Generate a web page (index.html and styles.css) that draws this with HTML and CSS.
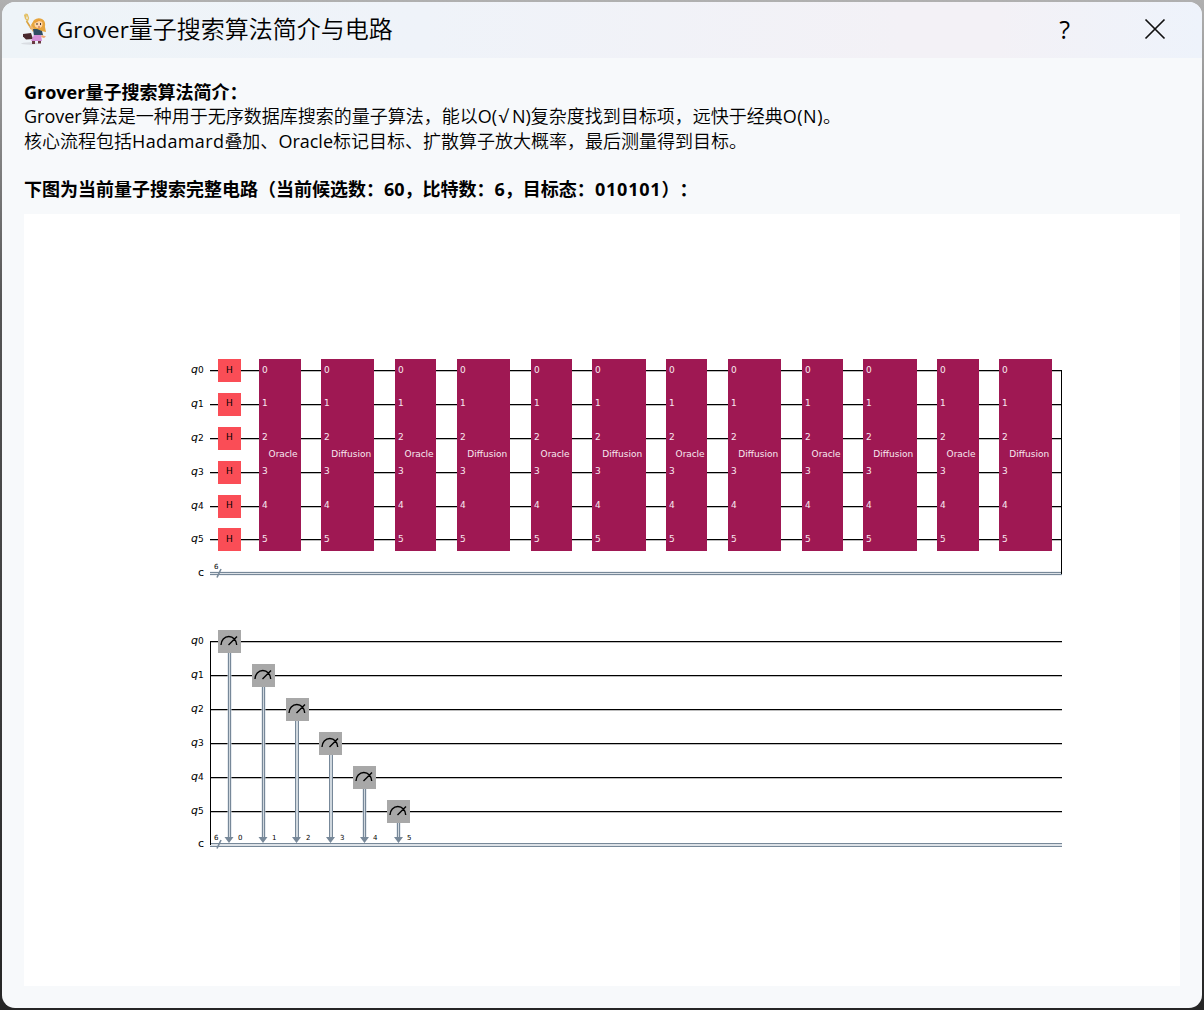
FILE: index.html
```html
<!DOCTYPE html>
<html lang="zh-CN">
<head>
<meta charset="utf-8">
<title>Grover量子搜索算法简介与电路</title>
<link rel="stylesheet" href="styles.css">
</head>
<body>
<div class="dialog">
  <header class="titlebar">
    <svg class="app-icon" viewBox="0 0 28 34" width="28" height="34">
      <ellipse cx="9" cy="31.500" rx="9" ry="1.200" fill="#d9dde2"/>
      <path d="M5.500 9l5 8" fill="none" stroke="#d9a13e" stroke-width="1.600"/>
      <path d="M3.500 2.500l1 4 2 2.500 1-3-1.500-4M5 1.500v4" fill="none" stroke="#e3bf62" stroke-width="1.300"/>
      <path d="M2 22l8-1 2 6-7 .500-3-3z" fill="#49282d"/>
      <path d="M13 8q4-3 8-1 4 2 3 8l1 5-5-1-8-2-2-4z" fill="#e6a53e"/>
      <path d="M8 14l3 0 3 4-2 2z" fill="#edb56e"/>
      <circle cx="17.500" cy="12" r="4" fill="#ffd5a7"/>
      <path d="M13 10q4-5 9 0l-4-1-4 2z" fill="#e99d35"/>
      <path d="M16 11v2M19.500 11v2" stroke="#3b302d"/>
      <path d="M17 15h2" stroke="#bd5740"/>
      <path d="M12 17l4 0 5 2 1 4-9 1z" fill="#304d63"/>
      <path d="M13 23h7l1 6h-11z" fill="#d48fd7"/>
      <path d="M11 29h3v3h-3zM17 29h3v2.500h-3z" fill="#6b3941"/>
      <path d="M21 23l4 1.500-2 1.500-3-1z" fill="#f0a66e"/>
    </svg>
    <h1 class="title"><span class="latin">Grover</span>量子搜索算法简介与电路</h1>
    <span class="help">?</span>
    <svg class="close" viewBox="0 0 22 22" width="22" height="22"><path d="M1.500 1.500l19 19M20.500 1.500l-19 19"/></svg>
  </header>
  <main class="content">
    <div class="intro">
      <p><b>Grover量子搜索算法简介：</b></p>
      <p class="summary"><span class="latin">Grover</span>算法是一种用于无序数据库搜索的量子算法，能以<span class="latin">O(<span class="root">√</span>N)</span>复杂度找到目标项，远快于经典<span class="latin order">O(N)</span>。</p>
      <p>核心流程包括<span class="latin name">Hadamard</span>叠加、<span class="latin">Oracle</span>标记目标、扩散算子放大概率，最后测量得到目标。</p>
      <p class="caption"><b>下图为当前量子搜索完整电路（当前候选数：60，比特数：6，目标态：<span class="state">010101</span>）：</b></p>
    </div>
    <div class="figure">
      <svg class="circuit" viewBox="24 214 1156 772" width="1156" height="772">
        <defs>
          <g id="labels">
            <text x="191" y="373"><tspan class="q">q</tspan><tspan class="sub">0</tspan></text>
            <text x="191" y="407"><tspan class="q">q</tspan><tspan class="sub">1</tspan></text>
            <text x="191" y="441"><tspan class="q">q</tspan><tspan class="sub">2</tspan></text>
            <text x="191" y="475"><tspan class="q">q</tspan><tspan class="sub">3</tspan></text>
            <text x="191" y="509"><tspan class="q">q</tspan><tspan class="sub">4</tspan></text>
            <text x="191" y="542"><tspan class="q">q</tspan><tspan class="sub">5</tspan></text>
          </g>
          <g id="pins">
            <text x="3" y="373">0</text><text x="3" y="406">1</text><text x="3" y="440">2</text>
            <text x="3" y="474">3</text><text x="3" y="508">4</text><text x="3" y="542">5</text>
          </g>
          <g id="oracle"><rect y="359" width="41" height="192"/><use href="#pins"/><text x="9.600" y="457" textLength="29">Oracle</text></g>
          <g id="diffusion"><rect y="359" width="53" height="192"/><use href="#pins"/><text x="10.300" y="457" textLength="40">Diffusion</text></g>
          <g id="meter"><rect width="23" height="23"/><path d="M3 15A7.800 8.500 0 0 1 18.700 15M10.500 15L19 6.500"/></g>
        </defs>

        <g class="halo"><path d="M210 371H1062M210 405H1062M210 439H1062M210 473H1062M210 507H1062M210 540H1062"/></g>
        <g class="wire"><path d="M210 370.500H1062M210 404.500H1062M210 438.500H1062M210 472.500H1062M210 506.500H1062M210 539.500H1062"/></g>
        <g class="bus"><path class="bus-fill" d="M210 573.500H1062"/><path d="M210 572.500H1062M210 574.500H1062"/><path class="slash" d="M217 577.500l4-8.500"/></g>
        <path class="edge" d="M1061.500 370V574"/>
        <use href="#labels"/>
        <text class="c" x="198" y="576">c</text>
        <text class="tiny" x="214" y="569">6</text>

        <g class="h-gate">
          <rect x="218" y="359" width="23" height="23"/><text x="229.400" y="373">H</text>
          <rect x="218" y="393" width="23" height="23"/><text x="229.400" y="406">H</text>
          <rect x="218" y="427" width="23" height="23"/><text x="229.400" y="440">H</text>
          <rect x="218" y="461" width="23" height="23"/><text x="229.400" y="474">H</text>
          <rect x="218" y="495" width="23" height="23"/><text x="229.400" y="508">H</text>
          <rect x="218" y="528" width="23" height="23"/><text x="229.400" y="542">H</text>
        </g>
        <g class="block">
          <rect x="300" y="359" width="1" height="192"/><rect x="978" y="359" width="1" height="192"/>
          <rect x="645" y="359" width="1" height="192"/><rect x="916" y="359" width="1" height="192"/>
          <use href="#oracle" x="259"/><use href="#diffusion" x="321"/>
          <use href="#oracle" x="395"/><use href="#diffusion" x="457"/>
          <use href="#oracle" x="531"/><use href="#diffusion" x="592"/>
          <use href="#oracle" x="666"/><use href="#diffusion" x="728"/>
          <use href="#oracle" x="802"/><use href="#diffusion" x="863"/>
          <use href="#oracle" x="937"/><use href="#diffusion" x="999"/>
        </g>

        <g class="halo"><path d="M210 642H1062M210 676H1062M210 710H1062M210 744H1062M210 778H1062M210 812H1062"/></g>
        <g class="wire"><path d="M210 641.500H1062M210 675.500H1062M210 709.500H1062M210 743.500H1062M210 777.500H1062M210 811.500H1062"/></g>
        <g class="bus"><path class="bus-fill" d="M210 845H1062"/><path d="M210 843.500H1062M210 846.500H1062"/><path class="slash" d="M217 848.500l4-8.500"/></g>
        <path class="edge" d="M210.500 641V845"/>
        <g class="q-labels">
          <text x="191" y="644"><tspan class="q">q</tspan><tspan class="sub">0</tspan></text>
          <text x="191" y="678"><tspan class="q">q</tspan><tspan class="sub">1</tspan></text>
          <text x="191" y="712"><tspan class="q">q</tspan><tspan class="sub">2</tspan></text>
          <text x="191" y="746"><tspan class="q">q</tspan><tspan class="sub">3</tspan></text>
          <text x="191" y="780"><tspan class="q">q</tspan><tspan class="sub">4</tspan></text>
          <text x="191" y="814"><tspan class="q">q</tspan><tspan class="sub">5</tspan></text>
        </g>
        <text class="c" x="198" y="847">c</text>
        <g class="bus">
          <path class="drop-fill" d="M229.500 653V838M263.500 687V838M297 721V838M331 755V838M364.500 789V838M398.500 823V838"/>
          <path d="M228.500 653V838M230.500 653V838M262.500 687V838M264.500 687V838M295.500 721V838M298.500 721V838M329.500 755V838M332.500 755V838M363.500 789V838M365.500 789V838M397.500 823V838M399.500 823V838"/>
        </g>
        <path class="arrows" d="M224.500 837h9l-4.500 6zM258.500 837h9l-4.500 6zM292 837h9l-4.500 6zM326 837h9l-4.500 6zM360 837h9l-4.500 6zM394 837h9l-4.500 6z"/>
        <g class="meters">
          <use href="#meter" x="218" y="630"/><use href="#meter" x="252" y="664"/>
          <use href="#meter" x="286" y="698"/><use href="#meter" x="319" y="732"/>
          <use href="#meter" x="353" y="766"/><use href="#meter" x="387" y="800"/>
        </g>
        <g class="tiny">
          <text x="214" y="840">6</text><text x="238" y="840">0</text><text x="272" y="840">1</text>
          <text x="306" y="840">2</text><text x="340" y="840">3</text><text x="373" y="840">4</text><text x="407" y="840">5</text>
        </g>
      </svg>
    </div>
  </main>
</div>
</body>
</html>
```
FILE: styles.css
```css
* { box-sizing: border-box; }
html { height: 100%; background: linear-gradient(#b0b0b0, #999 8%, #555 30%, #262626); }
body {
  height: 100%;
  margin: 0;
  padding: 2px;
  font-family: "Open Sans", "Noto Sans CJK SC", sans-serif;
  color: #000;
}
.dialog {
  display: flex;
  flex-direction: column;
  height: 1006px;
  border-radius: 13px;
  overflow: hidden;
  background: #f7f9fb;
}
.titlebar {
  display: flex;
  align-items: center;
  height: 56px;
  padding: 0 36px 2px 19px;
  background: linear-gradient(90deg, #eef4f8, #eff3f9 35%, #f3f1f6 75%, #f3f1f6 83%, #eef3fb);
}
.app-icon { margin-right: 8px; }
.title {
  flex: 1;
  margin: 0;
  font-size: 24px;
  font-weight: 350;
  line-height: 36px;
}
.latin { font-weight: 400; }
.title .latin { font-size: 22.400px; }
.help { margin-right: 74px; font-size: 25px; font-weight: 500; line-height: 36px; }
.close { fill: none; stroke: #111; stroke-width: 1.700; }
.content { padding: 22px; }
.intro {
  height: 134px;
  font-size: 18px;
  font-weight: 350;
  text-spacing-trim: space-all;
}
.intro p { margin: 0; line-height: 24.300px; white-space: nowrap; }
.intro .summary { line-height: 25px; }
.intro b { font-weight: 700; }
.intro .caption { margin-top: 23.600px; }
.root { margin: 0 3.500px 0 1.500px; }
.order { letter-spacing: 0.500px; }
.name { letter-spacing: 0.380px; }
.state { letter-spacing: 0.800px; }
.figure { height: 772px; background: #fff; }
.circuit { display: block; font-family: "DejaVu Sans", sans-serif; font-size: 9px; }
.q { font-size: 11px; font-style: italic; }
.sub { font-size: 9px; }
.c { font-size: 11px; }
.tiny { font-size: 7px; }
.halo { fill: none; stroke: #bcbcbc; stroke-width: 2; }
.wire, .edge { fill: none; stroke: #000; stroke-width: 1; }
.bus { fill: none; stroke: #778899; stroke-width: 1; }
.bus .bus-fill { stroke: #dde2e7; stroke-width: 4; }
.bus .drop-fill { stroke: #d0d8df; stroke-width: 4; }
.bus .slash { stroke-width: 1.600; }
.arrows { fill: #778899; }
.h-gate rect { fill: #fa4d56; }
.h-gate text { text-anchor: middle; fill: #000; }
.block rect { fill: #9f1853; }
.block { fill: #9f1853; }
#oracle text, #diffusion text, #pins text { fill: #f8e8f0; }
.meters { fill: #a8a8a8; }
#meter path { fill: none; stroke: #000; stroke-width: 1.400; }
```
